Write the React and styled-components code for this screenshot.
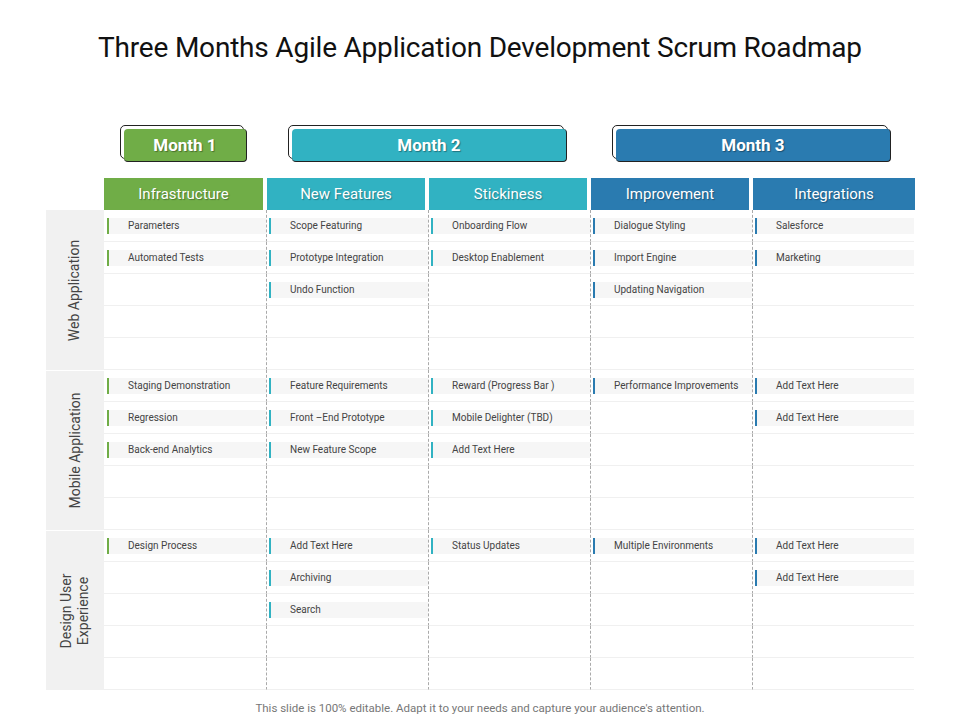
import React from "react";
import styled, { createGlobalStyle } from "styled-components";

const G = createGlobalStyle`
  html,body{margin:0;padding:0;background:#fff;font-family:Roboto,"Liberation Sans",sans-serif;}
`;
const Page = styled.div`width:960px;height:720px;position:relative;`;
const Title = styled.h1`margin:0;padding-top:31px;text-align:center;font-weight:400;font-size:28px;color:#111;letter-spacing:-0.2px;height:94px;box-sizing:border-box;`;
const Grid = styled.div`display:grid;grid-template-columns:58px repeat(5,162px);margin-left:46px;`;
const MonthRow = styled.div`display:grid;grid-template-columns:58px repeat(5,162px);margin-left:46px;height:84px;`;
const Pill = styled.div`
  grid-column:${p=>p.col};justify-self:${p=>p.js||"center"};margin-left:${p=>p.ml||0}px;margin-top:31px;
  width:${p=>p.w}px;height:34px;position:relative;box-sizing:border-box;
  border:1px solid #222;border-radius:5px;
`;
const PillFill = styled.div`
  position:absolute;left:3px;top:3px;right:-4px;bottom:-4px;background:${p=>p.c};border-radius:4px;
  border:1px solid #222;border-top:none;border-left:none;
  display:flex;align-items:center;justify-content:center;color:#fff;font-weight:700;font-size:17px;
  text-shadow:1px 1px 1px rgba(0,0,0,.35);
`;
const Head = styled.div`
  grid-column:${p=>p.col};background:${p=>p.c};color:#fff;height:32px;margin-right:${p=>p.mr}px;margin-left:${p=>p.ml}px;
  display:flex;align-items:center;justify-content:center;font-size:15px;text-shadow:1px 1px 1px rgba(0,0,0,.3);
`;
const Label = styled.div`
  grid-column:1;grid-row:span 5;background:#f1f1f1;display:flex;align-items:center;justify-content:center;
  ${p=>p.first?"":"border-top:1px solid #fff;"}
`;
const LabelText = styled.div`transform:rotate(-90deg);white-space:nowrap;text-align:center;font-size:14px;color:#444;line-height:17px;`;
const Cell = styled.div`
  height:32px;box-sizing:border-box;border-bottom:1px solid #f0f0f0;
  ${p=>p.dash?"border-left:1px dashed #aaa;":""}
  display:flex;align-items:center;padding-left:${p=>p.dash?2:3}px;
`;
const Item = styled.div`
  flex:1;height:16px;background:#f6f6f6;display:flex;align-items:center;font-size:10px;color:#444;
  border-left:2px solid ${p=>p.c};padding-left:19px;white-space:nowrap;
`;
const Foot = styled.div`position:absolute;top:701px;width:100%;text-align:center;font-size:11.5px;color:#777;`;

const colors=["#70ad47","#31b2c2","#31b2c2","#2a7bb0","#2a7bb0"];
const heads=["Infrastructure","New Features","Stickiness","Improvement","Integrations"];
const sections=[
 {label:["Web Application"],cols:[["Parameters","Automated Tests"],["Scope Featuring","Prototype Integration","Undo Function"],["Onboarding Flow","Desktop Enablement"],["Dialogue Styling","Import Engine","Updating Navigation"],["Salesforce","Marketing"]]},
 {label:["Mobile Application"],cols:[["Staging Demonstration","Regression","Back-end Analytics"],["Feature Requirements","Front –End Prototype","New Feature Scope"],["Reward (Progress Bar )","Mobile Delighter (TBD)","Add Text Here"],["Performance Improvements"],["Add Text Here","Add Text Here"]]},
 {label:["Design User","Experience"],cols:[["Design Process"],["Add Text Here","Archiving","Search"],["Status Updates"],["Multiple Environments"],["Add Text Here","Add Text Here"]]},
];

export default function App(){
  const body=[];
  sections.forEach((s,si)=>{
    body.push(<Label key={"l"+si} first={si===0} style={{gridRow:`${2+si*5} / span 5`}}><LabelText>{s.label.map(t=><div key={t}>{t}</div>)}</LabelText></Label>);
    for(let r=0;r<5;r++){
      for(let c=0;c<5;c++){
        const t=s.cols[c][r];
        body.push(<Cell key={`${si}-${r}-${c}`} dash={c>0} style={{gridColumn:c+2,gridRow:2+si*5+r}}>{t&&<Item c={colors[c]}>{t}</Item>}</Cell>);
      }
    }
  });
  return <Page><G/>
    <Title>Three Months Agile Application Development Scrum Roadmap</Title>
    <MonthRow>
      <Pill col={2} js="start" ml={16} w={124}><PillFill c="#70ad47">Month 1</PillFill></Pill>
      <Pill col="3 / span 2" js="start" ml={22} w={276}><PillFill c="#31b2c2">Month 2</PillFill></Pill>
      <Pill col="5 / span 2" js="start" ml={22} w={276}><PillFill c="#2a7bb0">Month 3</PillFill></Pill>
    </MonthRow>
    <Grid>
      {heads.map((h,i)=><Head key={h} col={i+2} c={colors[i]} ml={i===0?0:1} mr={i===4?-1:3} style={{gridRow:1}}>{h}</Head>)}
      {body}
    </Grid>
    <Foot>This slide is 100% editable. Adapt it to your needs and capture your audience's attention.</Foot>
  </Page>;
}
